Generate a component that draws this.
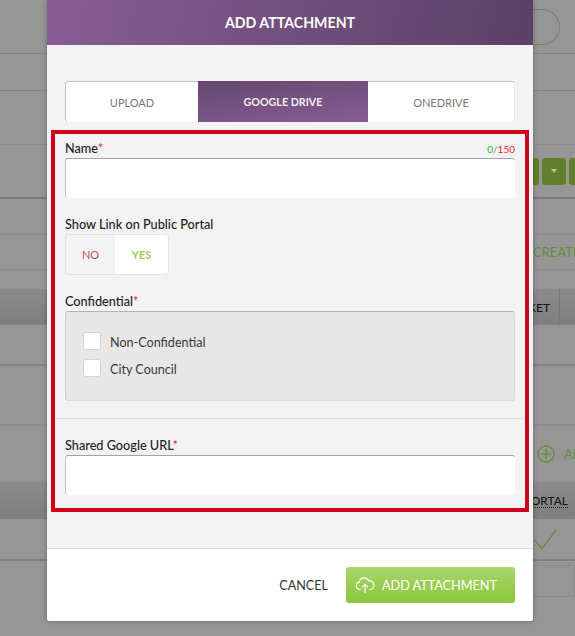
<div class="page">
  <div class="row r1"><span class="round"></span></div>
  <div class="row r2"></div>
  <div class="row r3"></div>
  <div class="row r4">
    <span class="gbtn first"></span>
    <span class="gbtn mid"><i class="caret"></i></span>
    <span class="gbtn last"></span>
  </div>
  <div class="row r5"></div>
  <div class="row r6"><span class="create">CREATE</span></div>
  <div class="row r7"></div>
  <div class="band b1"><span class="bandtext">KET</span><span class="sep"></span></div>
  <div class="row r8"></div>
  <div class="row r9"></div>
  <div class="row r10">
    <svg class="plus" viewBox="0 0 18 18" width="18" height="18">
      <circle cx="9" cy="9" r="8" fill="none" stroke="#6a8a3a" stroke-width="1.3" />
      <path d="M9 4v10M4 9h10" fill="none" stroke="#6a8a3a" stroke-width="1.3" />
    </svg>
    <span class="create add">AD</span>
  </div>
  <div class="band b2"><span class="bandtext portal">ORTAL</span></div>
  <div class="row r11">
    <svg class="check" viewBox="0 0 24 24" width="24" height="24">
      <path d="M2 13l7 9L23 3" fill="none" stroke="#6a8a3a" stroke-width="1.3" />
    </svg>
  </div>
  <div class="tail"><span class="tailbox"></span></div>
</div>

<div class="modal">
  <header class="head">ADD ATTACHMENT</header>

  <div class="body">
    <div class="tabs">
      <button class="tab t-up">UPLOAD</button>
      <button class="tab t-drive active">GOOGLE DRIVE</button>
      <button class="tab t-one">ONEDRIVE</button>
    </div>

    <form class="form">
      <div class="labelrow">
        <label for="name">Name<em>*</em></label>
        <span class="count"><b>0</b>/<u>150</u></span>
      </div>
      <input id="name" class="text" type="text" />

      <div class="lbl lbl-show">Show Link on Public Portal</div>
      <div class="toggle">
        <span class="no">NO</span>
        <span class="yes">YES</span>
      </div>

      <div class="lbl lbl-conf">Confidential<em>*</em></div>
      <div class="panel">
        <label class="opt"><span class="box"></span><span class="opttext">Non-Confidential</span></label>
        <label class="opt"><span class="box"></span><span class="opttext">City Council</span></label>
      </div>

      <hr class="divider" />

      <label class="lbl lbl-url" for="url">Shared Google URL<em>*</em></label>
      <input id="url" class="text" type="text" />
    </form>
  </div>

  <footer class="foot">
    <span class="cancel">CANCEL</span>
    <button class="submit">
      <svg viewBox="0 0 20 18" width="20" height="18">
        <path d="M6 13.5H4.6A3.7 3.7 0 0 1 4.2 6.2 5 5 0 0 1 13.8 5a4.3 4.3 0 0 1 1.6 8.5H14" fill="none" stroke="#fff" stroke-width="1.2" />
        <path d="M10 17V8.5M7 11.3l3-3 3 3" fill="none" stroke="#fff" stroke-width="1.2" />
      </svg>
      ADD ATTACHMENT
    </button>
  </footer>
</div>

<style>
  :global(body) {
    margin: 0;
    background: #969696;
    font-family: Lato, "Liberation Sans", sans-serif;
    overflow: hidden;
  }

  .page {
    height: 636px;
    overflow: hidden;
    background: #969696;
  }

  .row {
    box-sizing: border-box;
    display: flex;
    align-items: center;
    border-bottom: 1px solid #858585;
  }

  .r1 { height: 54px; }
  .r2 { height: 37px; }
  .r3 { height: 54px; border-bottom-color: #8b8b8b; }
  .r4 { height: 54px; border-bottom: 2px solid #7a7a7a; padding-left: 524px; gap: 3px; }
  .r5 { height: 36px; border-bottom: 2px solid #8e8e8e; }
  .r6 { height: 36px; border-bottom: 2px solid #8e8e8e; padding-left: 533px; }
  .r7 { height: 18px; border: 0; }
  .r8 { height: 41px; border-bottom: 2px solid #828282; }
  .r9 { height: 60px; border-bottom: 2px solid #8e8e8e; }
  .r10 { height: 57px; border-bottom: 2px solid #8e8e8e; padding-left: 537px; gap: 9px; }
  .r11 { height: 42px; border-bottom: 2px solid #7f7f7f; padding-left: 533px; }

  .round {
    width: 30px;
    height: 36px;
    margin-left: 530px;
    box-sizing: border-box;
    border: 1px solid #7d7d7d;
    border-left: 0;
    border-radius: 0 18px 18px 0;
  }

  .gbtn {
    flex: none;
    height: 27px;
    background: #628029;
    border-radius: 3px;
    display: flex;
    align-items: center;
    justify-content: center;
  }
  .first { width: 15px; }
  .mid { width: 24px; }
  .last { width: 26px; }

  .caret {
    width: 0;
    height: 0;
    border: 3px solid transparent;
    border-top: 4px solid #b5c39b;
    border-bottom: 0;
  }

  .plus,
  .check {
    flex: none;
  }

  .create {
    color: #6a8a3a;
    font-size: 13px;
    white-space: nowrap;
  }

  .band {
    height: 36px;
    display: flex;
    align-items: center;
    justify-content: flex-end;
    background: linear-gradient(#8b8b8b, #7e7e7e);
    box-sizing: border-box;
    position: relative;
  }

  .bandtext {
    color: #111;
    font-size: 12px;
  }

  .b1 .bandtext { margin-right: 25px; }
  .b2 .bandtext { margin-right: 7px; border-bottom: 1px dotted #222; line-height: 13px; }

  .sep {
    width: 1px;
    height: 36px;
    background: #777;
    position: absolute;
    left: 559px;
    top: 0;
  }

  .tail {
    height: 40px;
    padding: 4px 0 0 526px;
  }

  .tailbox {
    display: block;
    height: 30px;
    border: 1px solid #8a8a8a;
    border-radius: 3px 0 0 0;
  }

  .modal {
    position: absolute;
    z-index: 1;
    left: 47px;
    top: 0;
    width: 486px;
    height: 621px;
    display: flex;
    flex-direction: column;
    border-radius: 0 0 3px 3px;
    background: #f3f3f3;
    box-shadow: 0 0 5px rgba(0, 0, 0, 0.3);
  }

  .head {
    height: 45px;
    line-height: 46px;
    text-align: center;
    color: #fff;
    font-size: 14.2px;
    font-weight: 700;
    background: linear-gradient(100deg, #885e94, #5c4067);
  }

  .body {
    flex: 1;
    padding-top: 36px;
    box-sizing: border-box;
  }

  .tabs {
    display: flex;
    height: 41px;
    margin: 0 18px 8px;
  }

  .tab {
    border: 0;
    margin: 0;
    padding: 0;
    font: 400 11px Lato, sans-serif;
    color: #777;
    background: #fff;
    border-top: 1px solid #c4c4c4;
  }

  .t-up {
    width: 133px;
    border-left: 1px solid #c4c4c4;
    border-radius: 3px 0 0 3px;
  }

  .t-drive {
    width: 170px;
  }

  .t-one {
    width: 147px;
    border-right: 1px solid #e4e4e4;
    border-radius: 0 3px 3px 0;
  }

  .active {
    color: #f2edf3;
    font-size: 10.7px;
    font-weight: 700;
    border-top: 0;
    background: linear-gradient(172deg, #644870, #875d93);
  }

  .form {
    height: 382px;
    margin: 0 4px;
    padding: 0 10px;
    box-sizing: border-box;
    border: 4px solid #d0021b;
    display: flex;
    flex-direction: column;
  }

  .labelrow {
    display: flex;
    justify-content: space-between;
    height: 24px;
    padding-top: 4px;
    box-sizing: border-box;
    align-items: center;
  }

  .labelrow label,
  .lbl {
    font-size: 12.7px;
    font-weight: 500;
    color: #222;
    display: block;
  }

  em {
    font-style: normal;
    color: #d0364a;
  }

  .count {
    font-size: 10px;
    color: #888;
    margin-top: 2px;
  }
  .count b { font-weight: 400; color: #22c422; }
  .count u { text-decoration: none; color: #ee1c25; }

  .text {
    display: block;
    width: 100%;
    height: 40px;
    box-sizing: border-box;
    flex: none;
    margin: 0;
    padding: 0 8px;
    background: #fff;
    border: 0;
    border-top: 1px solid #a3a3a3;
    border-left: 1px solid #c2c2c2;
    border-radius: 3px;
    outline: 0;
  }

  .lbl-show { margin-top: 18px; line-height: 17px; }

  .toggle {
    display: flex;
    height: 41px;
    width: 104px;
    margin-top: 1px;
    font-size: 11px;
  }

  .no,
  .yes {
    display: flex;
    align-items: center;
    justify-content: center;
    box-sizing: border-box;
  }

  .no {
    width: 50px;
    color: #cf4b5c;
    border: 1px solid #e2e2e2;
    border-right: 0;
    border-radius: 3px 0 0 3px;
  }

  .yes {
    width: 54px;
    color: #9ccc57;
    font-weight: 700;
    background: #fff;
    border: 1px solid #e4e4e4;
    border-left: 0;
    border-radius: 0 4px 4px 0;
  }

  .lbl-conf { margin-top: 18px; line-height: 17px; }

  .panel {
    height: 90px;
    margin-top: 1px;
    box-sizing: border-box;
    padding: 20px 17px 0;
    background: #e7e7e7;
    border-top: 1px solid #b4b4b4;
    border-left: 1px solid #cfcfcf;
    border-right: 1px solid #d8d8d8;
    border-bottom: 1px solid #d8d8d8;
    border-radius: 3px;
    display: flex;
    flex-direction: column;
    gap: 9px;
  }

  .opt {
    display: flex;
    align-items: center;
    height: 18px;
    font-size: 12.6px;
    color: #3a3a3a;
    gap: 9px;
  }

  .opttext {
    padding-top: 2px;
  }

  .box {
    width: 18px;
    height: 18px;
    box-sizing: border-box;
    background: #fff;
    border: 1px solid #d4d4d4;
    border-radius: 3px;
  }

  .divider {
    position: relative;
    z-index: -1;
    border: 0;
    height: 1px;
    background: #e0e0e0;
    margin: 17px -14px 0;
  }

  .lbl-url { margin-top: 17px; line-height: 19px; }

  .foot {
    height: 73px;
    box-sizing: border-box;
    flex: none;
    background: #fff;
    border-top: 1px solid #dcdcdc;
    border-radius: 0 0 3px 3px;
    display: flex;
    align-items: center;
    justify-content: flex-end;
    padding: 0 18px 0 0;
    gap: 18px;
  }

  .cancel {
    font-size: 12.6px;
    color: #333;
  }

  .submit {
    width: 169px;
    height: 36px;
    border: 0;
    padding: 0 0 0 9px;
    display: flex;
    align-items: center;
    gap: 7px;
    color: #fff;
    font: 400 12.8px Lato, sans-serif;
    letter-spacing: -0.1px;
    background: linear-gradient(#a8d56c, #8dc63a);
    border-radius: 3px;
  }
</style>
